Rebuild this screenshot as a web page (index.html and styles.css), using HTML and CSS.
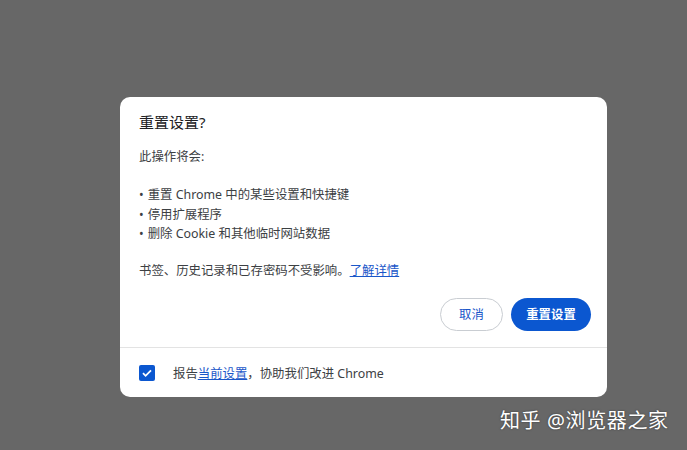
FILE: index.html
```html
<!DOCTYPE html>
<html lang="zh-CN">
<head>
  <meta charset="UTF-8">
  <title>重置设置</title>
  <link rel="stylesheet" href="styles.css">
</head>
<body>

  <div class="dialog">
    <div class="dialog-body">
      <h2>重置设置?</h2>
      <p class="intro">此操作将会:</p>
      <ul class="effects">
        <li>重置 Chrome 中的某些设置和快捷键</li>
        <li>停用扩展程序</li>
        <li>删除 Cookie 和其他临时网站数据</li>
      </ul>
      <p class="note">书签、历史记录和已存密码不受影响。<a href="#">了解详情</a></p>
      <div class="actions">
        <button class="btn btn-cancel">取消</button>
        <button class="btn btn-primary">重置设置</button>
      </div>
    </div>
    <div class="dialog-footer">
      <span class="checkbox">
        <svg width="12" height="12" viewBox="0 0 12 12"><path d="M2 6.2l2.6 2.6L10 3.4" fill="none" stroke="#fff" stroke-width="1.8"/></svg>
      </span>
      <span>报告<a href="#">当前设置</a>，协助我们改进 Chrome</span>
    </div>
  </div>

  <div class="watermark">知乎 @浏览器之家</div>

</body>
</html>
```

FILE: styles.css
```css
body {
  margin: 0;
  padding: 97px 0 0 120px;
  background: #676767;
  font-family: "Segoe UI", "Noto Sans", "Noto Sans CJK SC", sans-serif;
  height: 450px;
  box-sizing: border-box;
  overflow: hidden;
  position: relative;
}

.dialog {
  width: 487px;
  height: 300px;
  background: #fff;
  border-radius: 10px;
  display: flex;
  flex-direction: column;
  color: #202124;
}

.dialog-body {
  padding: 14px 16px 0 19px;
  flex: 1;
}

.dialog-body h2 {
  margin: 0;
  font-size: 15px;
  font-weight: normal;
  line-height: 22px;
}

.intro {
  margin: 15px 0 0;
  font-size: 12.4px;
  line-height: 18px;
  color: #3c4043;
}

.effects {
  list-style: none;
  margin: 19px 0 0;
  padding: 0;
  font-size: 12.4px;
  line-height: 19.5px;
  color: #3c4043;
}

.effects li::before {
  content: "•";
  margin-right: 4px;
}

.note {
  margin: 18px 0 0;
  font-size: 12.4px;
  line-height: 18px;
  color: #3c4043;
}

a {
  color: #1a57c9;
}

.actions {
  display: flex;
  justify-content: flex-end;
  gap: 8px;
  margin-top: 18px;
}

.btn {
  height: 33px;
  border-radius: 17px;
  font-family: inherit;
  font-size: 12.4px;
  padding: 0;
  white-space: nowrap;
  cursor: pointer;
}

.btn-cancel {
  width: 63px;
  background: #fff;
  border: 1px solid #c9cdd2;
  color: #1a57c9;
}

.btn-primary {
  width: 80px;
  background: #0b57d0;
  border: none;
  color: #fff;
  font-weight: bold;
}

.dialog-footer {
  border-top: 1px solid #e3e3e3;
  height: 49px;
  display: flex;
  align-items: center;
  padding: 0 19px 0;
  gap: 18px;
  font-size: 12.4px;
  color: #3c4043;
}

.checkbox {
  width: 16px;
  height: 16px;
  border-radius: 2px;
  background: #0b57d0;
  display: flex;
  align-items: center;
  justify-content: center;
}

.watermark {
  position: absolute;
  left: 500px;
  top: 405px;
  color: #fff;
  font-size: 20px;
  letter-spacing: 0.6px;
  text-shadow: 0 0 2px rgba(0, 0, 0, 0.5);
}
```
